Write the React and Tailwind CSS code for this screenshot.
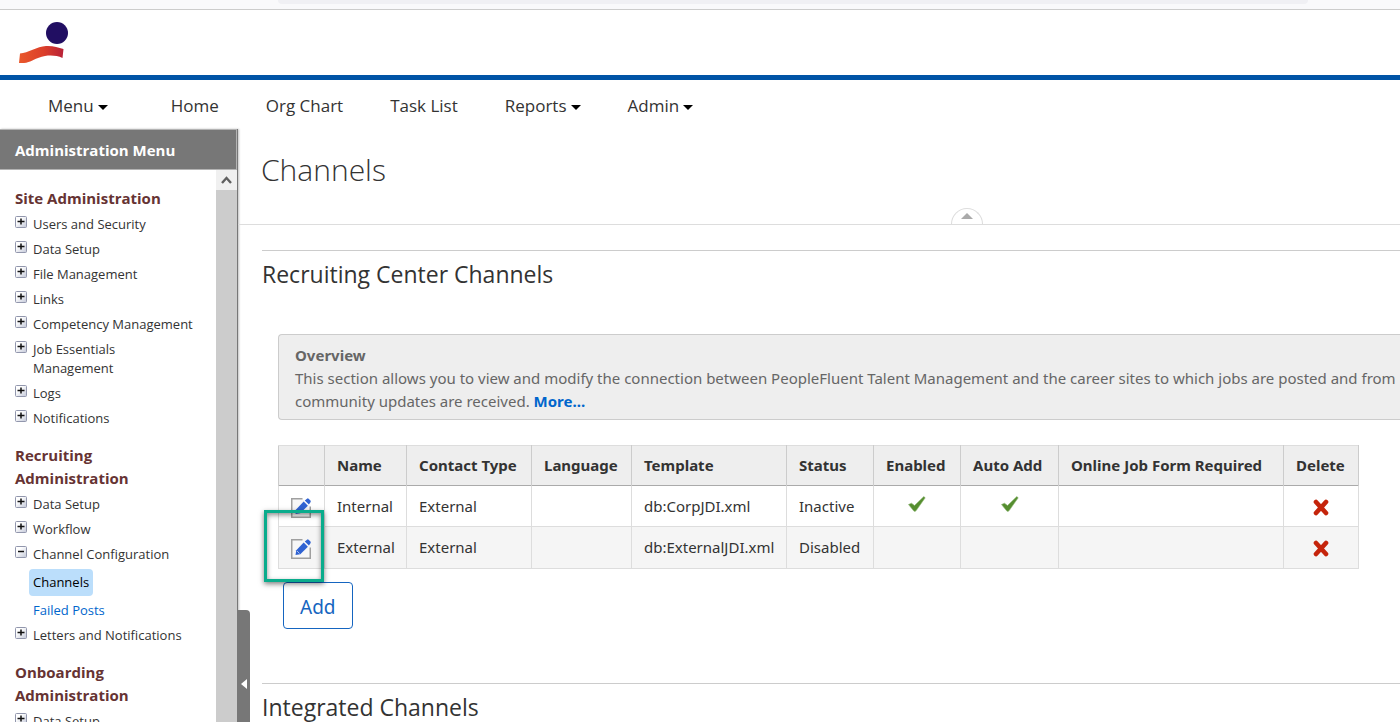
import React, { useState } from 'react';

const navItems = [
  { label: 'Menu', caret: true },
  { label: 'Home' },
  { label: 'Org Chart' },
  { label: 'Task List' },
  { label: 'Reports', caret: true },
  { label: 'Admin', caret: true },
];

const menuSections = [
  {
    title: 'Site Administration',
    items: [
      { label: 'Users and Security' },
      { label: 'Data Setup' },
      { label: 'File Management' },
      { label: 'Links' },
      { label: 'Competency Management' },
      { label: 'Job Essentials Management' },
      { label: 'Logs' },
      { label: 'Notifications' },
    ],
  },
  {
    title: 'Recruiting Administration',
    items: [
      { label: 'Data Setup' },
      { label: 'Workflow' },
      { label: 'Channel Configuration', children: ['Channels', 'Failed Posts'] },
      { label: 'Letters and Notifications' },
    ],
  },
  {
    title: 'Onboarding Administration',
    items: [{ label: 'Data Setup' }],
  },
];

const columns = [
  { label: '', width: 'w-[46px]' },
  { label: 'Name', width: 'w-[82px]' },
  { label: 'Contact Type', width: 'w-[125px]' },
  { label: 'Language', width: 'w-[100px]' },
  { label: 'Template', width: 'w-[155px]' },
  { label: 'Status', width: 'w-[87px]' },
  { label: 'Enabled', width: 'w-[87px]' },
  { label: 'Auto Add', width: 'w-[98px]' },
  { label: 'Online Job Form Required', width: 'w-[225px]' },
  { label: 'Delete', width: 'w-[75px]' },
];

const channels = [
  { name: 'Internal', contact: 'External', template: 'db:CorpJDI.xml', status: 'Inactive', enabled: true, autoAdd: true },
  { name: 'External', contact: 'External', template: 'db:ExternalJDI.xml', status: 'Disabled', highlighted: true },
];

function Logo() {
  return (
    <svg width="50" height="42" viewBox="0 0 50 42" aria-hidden="true">
      <defs>
        <linearGradient id="swoosh" x1="0" x2="1" y1="0" y2="0">
          <stop offset="0" stopColor="#e9582b" />
          <stop offset="0.55" stopColor="#dc3f2a" />
          <stop offset="1" stopColor="#b82238" />
        </linearGradient>
      </defs>
      <circle cx="38" cy="11" r="11" fill="#210e62" />
      <path d="M1 31.500C9 31 18 24.500 27 24C34 23.600 39 25.500 44.500 27L43.500 36C38 33.500 32 33 26 34C17 35.500 11 41 5 41H0Z" fill="url(#swoosh)" />
    </svg>
  );
}

function Caret() {
  return (
    <svg width="10" height="5" viewBox="0 0 10 5" className="mt-1" aria-hidden="true">
      <path d="M0 0H10L5 5Z" fill="#000" />
    </svg>
  );
}

function TreeIcon({ open }) {
  return (
    <svg width="12" height="12" viewBox="0 0 12 12" className="mt-px shrink-0" aria-hidden="true">
      <defs>
        <linearGradient id="tree" x1="0" x2="1" y1="0" y2="1">
          <stop offset="0.3" stopColor="#fff" />
          <stop offset="1" stopColor="#c3c8d8" />
        </linearGradient>
      </defs>
      <rect x="0.500" y="0.500" width="11" height="11" rx="1" fill="url(#tree)" stroke="#9297ad" />
      <path d={open ? 'M3 5.500H9' : 'M2.500 5.500H9.500M6 2.500V8.500'} stroke="#111" strokeWidth="1.500" />
    </svg>
  );
}

function EditIcon() {
  return (
    <svg width="20" height="20" viewBox="0 0 20 20" aria-hidden="true">
      <path d="M11.500 0.750H0.750V19.250H19.250V8.500" fill="#f7f7f7" stroke="#a0a0a0" strokeWidth="1.500" />
      <path d="M4.500 16L5.300 11.200L12.700 3.600L16.900 7.700L9.300 15.200Z" fill="#2f62d2" />
      <path d="M13.800 2.500L16 0.700Q16.800 0 17.600 0.700L19.500 2.600Q20 3.500 19.500 4.300L17.900 6.500Z" fill="#2f62d2" />
      <path d="M6 12L8.500 14.500" stroke="#a9bff0" strokeWidth="1" />
    </svg>
  );
}

function CheckIcon() {
  return (
    <svg width="18" height="16" viewBox="0 0 18 16" className="mx-auto mb-1" role="img" aria-label="Yes">
      <path d="M0.500 8.500L3.500 7.200L6.500 9.500L15.800 0.600L17.200 1.800L8 14.800Q6.800 16 5.600 14.800Z" fill="#558e2f" stroke="#8fb573" strokeWidth="0.600" />
    </svg>
  );
}

function DeleteIcon() {
  return (
    <svg width="16" height="17" viewBox="0 0 16 17" aria-hidden="true">
      <path d="M3 3L13 14M13 3L3 14" stroke="#c5240b" strokeWidth="4.600" strokeLinecap="round" />
    </svg>
  );
}

function BrowserEdge() {
  return (
    <div className="h-[10px] shrink-0 border-b border-[#cccccc] bg-[#f9f9fb] pl-[278px] pr-[92px]">
      <div className="h-1 rounded-b-sm bg-[#f0f0f4]" />
    </div>
  );
}

function TopNav() {
  return (
    <nav className="flex h-[49px] shrink-0 items-center gap-[47px] pt-[2px] pl-12 text-[17px] text-[#333333]">
      {navItems.map((item) => (
        <a key={item.label} href="#" className="flex items-center gap-1 whitespace-nowrap first:mr-4">
          {item.label}
          {item.caret && <Caret />}
        </a>
      ))}
    </nav>
  );
}

function SideMenu() {
  const [current, setCurrent] = useState('Channels');

  return (
    <aside className="flex w-[238px] shrink-0 flex-col border-r border-[#777777] shadow-[1px_0_2px_rgba(0,0,0,0.25)]">
      <h2 className="h-[41px] shrink-0 border-y border-r border-[#b3b3b3] bg-[#777777] pl-[15px] text-[15px] leading-[41px] font-bold text-white">
        Administration Menu
      </h2>
      <div className="flex min-h-0 flex-1">
        <div className="flex-1 overflow-hidden pt-[17px] pl-[15px]">
          {menuSections.map((section) => (
            <section key={section.title} className="mb-4">
              <h3 className="mb-[5px] pr-12 text-[15px] leading-[23px] font-bold text-[#663333]">
                {section.title}
              </h3>
              <ul className="flex flex-col gap-[6px] text-[13px] leading-[19px] text-[#333333]">
                {section.items.map((item) => (
                  <li key={item.label}>
                    <a href="#" className="flex items-start gap-[6px] pr-5">
                      <TreeIcon open={Boolean(item.children)} />
                      {item.label}
                    </a>
                    {item.children && (
                      <ul className="mt-[5px] flex flex-col items-start gap-[5px] pl-[14px]">
                        {item.children.map((child) => (
                          <li key={child}>
                            <a
                              href="#"
                              onClick={() => setCurrent(child)}
                              className={
                                child === current
                                  ? 'block rounded bg-[#bbdefb] px-1 py-1 text-black'
                                  : 'block px-1 text-[#0066cc]'
                              }
                            >
                              {child}
                            </a>
                          </li>
                        ))}
                      </ul>
                    )}
                  </li>
                ))}
              </ul>
            </section>
          ))}
        </div>
        {/* Scrollbar */}
        <div className="w-[21px] shrink-0 bg-[#cccccc]">
          <div className="flex h-5 items-center justify-center bg-[#f0f0f0]">
            <svg width="11" height="9" viewBox="0 0 11 9" aria-hidden="true">
              <path d="M1 7L5.500 2L10 7" fill="none" stroke="#606060" strokeWidth="2.400" />
            </svg>
          </div>
        </div>
      </div>
    </aside>
  );
}

function ChannelTable() {
  return (
    <table className="w-[1081px] table-fixed border-collapse text-left text-[15px] whitespace-nowrap text-[#333333]">
      <thead>
        <tr className="h-10 border-b border-[#aaaaaa] bg-[#eeeeee]">
          {columns.map((col) => (
            <th key={col.label} scope="col" className={`${col.width} border-x border-t border-x-[#cccccc] border-t-[#dddddd] pl-3 font-bold`}>
              {col.label}
            </th>
          ))}
        </tr>
      </thead>
      <tbody>
        {channels.map((row) => (
          <tr key={row.name} className="h-[41px] even:h-[42px] even:bg-[#f5f5f5] [&>td]:border-x [&>td]:border-b [&>td]:border-[#dddddd] [&>td]:pl-3">
            <td className="relative">
              <button type="button" aria-label={`Edit ${row.name}`} className="block pt-[3px]">
                <EditIcon />
              </button>
              {row.highlighted && (
                <div className="pointer-events-none absolute -top-[17px] -left-[15px] h-[72px] w-[60px] border-3 border-[#0aac8c] shadow-[0_2px_5px_rgba(0,0,0,0.5),inset_0_2px_5px_rgba(0,0,0,0.45)]" />
              )}
            </td>
            <td>{row.name}</td>
            <td>{row.contact}</td>
            <td />
            <td>{row.template}</td>
            <td>{row.status}</td>
            <td className="pr-3">{row.enabled && <CheckIcon />}</td>
            <td className="pr-3">{row.autoAdd && <CheckIcon />}</td>
            <td />
            <td className="pr-3">
              <button type="button" aria-label={`Delete ${row.name}`} className="mx-auto block pt-[2px]">
                <DeleteIcon />
              </button>
            </td>
          </tr>
        ))}
      </tbody>
    </table>
  );
}

function App() {
  return (
    <div className="flex h-screen flex-col overflow-hidden bg-white font-['Open_Sans','Noto_Sans',sans-serif]">
      <BrowserEdge />
      <header className="h-[70px] shrink-0 border-b-5 border-[#0054a6] pt-3 pl-[19px]">
        <Logo />
      </header>
      <TopNav />

      <div className="flex min-h-0 flex-1">
        <SideMenu />

        <main className="relative min-w-0 flex-1 overflow-hidden">
          {/* Menu collapse handle */}
          <button
            type="button"
            aria-label="Collapse menu"
            className="absolute bottom-0 left-0 flex h-[112px] w-3 items-center justify-center rounded-tr bg-[#777777] pt-9"
          >
            <svg width="6" height="10" viewBox="0 0 6 10" aria-hidden="true">
              <path d="M6 0V10L0 5Z" fill="#fff" />
            </svg>
          </button>

          <div className="relative h-24 border-b border-[#dddddd] pt-4 pl-[23px]">
            <h1 className="text-3xl leading-[50px] font-light text-[#333333]">Channels</h1>
            <button
              type="button"
              aria-label="Collapse header"
              className="absolute right-[417px] bottom-0 flex h-4 w-8 justify-center rounded-t-full border border-b-0 border-[#dddddd] bg-white pt-1"
            >
              <svg width="12" height="6" viewBox="0 0 12 6" aria-hidden="true">
                <path d="M6 0L12 6H0Z" fill="#aaaaaa" />
              </svg>
            </button>
          </div>

          <div className="pt-[25px] pl-6">
            <section className="border-t border-[#cccccc] pt-[7px] pb-[54px]">
              <h2 className="text-[23px] leading-8 text-[#333333]">Recruiting Center Channels</h2>
              <div className="mt-11 pl-4 font-['Noto_Sans','Open_Sans',sans-serif]">
                <div className="rounded-l border border-r-0 border-[#cccccc] bg-[#eeeeee] pt-[9px] pb-[6px] pl-4 text-[15px] leading-[23px] whitespace-nowrap text-[#666666]">
                  <p className="font-bold">Overview</p>
                  <p>
                    This section allows you to view and modify the connection between PeopleFluent Talent Management and the career sites to which jobs are posted and from
                    <br />
                    community updates are received.{' '}
                    <a href="#" className="font-bold text-[#0066cc]">More...</a>
                  </p>
                </div>
                <div className="mt-[25px]">
                  <ChannelTable />
                </div>
                <button
                  type="button"
                  className="mt-[13px] ml-[5px] h-[47px] rounded border border-[#1565c0] bg-white px-4 pt-[3px] text-[19px] text-[#1565c0]"
                >
                  Add
                </button>
              </div>
            </section>

            <section className="border-t border-[#cccccc] pt-[7px]">
              <h2 className="text-[23px] leading-8 text-[#333333]">Integrated Channels</h2>
            </section>
          </div>
        </main>
      </div>
    </div>
  );
}

export default App;
